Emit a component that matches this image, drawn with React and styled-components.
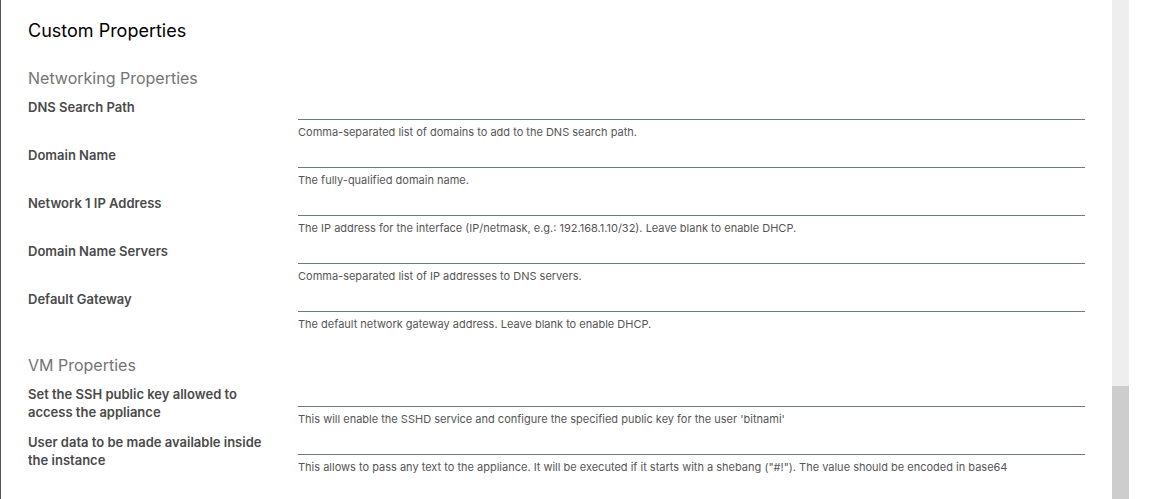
import React from 'react';
import styled, { createGlobalStyle } from 'styled-components';

const GlobalStyle = createGlobalStyle`
  html, body {
    margin: 0;
    padding: 0;
    background: #ffffff;
  }
  body {
    font-family: Inter, Lato, sans-serif;
    color: #454545;
  }
`;

const Page = styled.div`
  display: flex;
  height: 499px;
  overflow: hidden;
`;

const Panel = styled.div`
  flex: 1;
  display: flex;
  flex-direction: column;
  border-left: 1px solid #565656;
  padding: 19px 27px 0 27px;
`;

const Track = styled.div`
  width: 17px;
  background: #eeeeee;
  display: flex;
  flex-direction: column;
`;

const Thumb = styled.div`
  margin-top: 386px;
  flex: 1;
  background: #cdcdcd;
`;

const Gutter = styled.div`
  width: 24px;
`;

const Title = styled.h2`
  margin: 0 0 8px;
  font-size: 18px;
  line-height: 24px;
  font-weight: 400;
  color: #000000;
`;

const SectionTitle = styled.h3`
  margin: 17px 0 10px;
  font-size: 16px;
  line-height: 20px;
  font-weight: 400;
  color: #747474;
`;

const Row = styled.div`
  display: grid;
  grid-template-columns: 270px 1fr;
  height: 48px;
  flex-shrink: 0;
`;

const Label = styled.label`
  font-size: 13px;
  line-height: 18px;
  font-weight: 600;
  color: #4a4a4a;
  padding-right: 20px;
`;

const Field = styled.div`
  display: flex;
  flex-direction: column;
`;

const Input = styled.input`
  height: 22px;
  box-sizing: border-box;
  border: none;
  border-bottom: 1px solid #6a7a81;
  outline: none;
  padding: 0;
  background: transparent;
`;

const Helper = styled.span`
  margin-top: 5px;
  font-size: 11px;
  line-height: 14px;
  color: #565656;
`;

const networking = [
  ['DNS Search Path', 'Comma-separated list of domains to add to the DNS search path.'],
  ['Domain Name', 'The fully-qualified domain name.'],
  ['Network 1 IP Address', 'The IP address for the interface (IP/netmask, e.g.: 192.168.1.10/32). Leave blank to enable DHCP.'],
  ['Domain Name Servers', 'Comma-separated list of IP addresses to DNS servers.'],
  ['Default Gateway', 'The default network gateway address. Leave blank to enable DHCP.'],
];

const vm = [
  ['Set the SSH public key allowed to access the appliance', "This will enable the SSHD service and configure the specified public key for the user 'bitnami'"],
  ['User data to be made available inside the instance', 'This allows to pass any text to the appliance. It will be executed if it starts with a shebang ("#!"). The value should be encoded in base64'],
];

const PropRow = ({ label, help }) => (
  <Row>
    <Label>{label}</Label>
    <Field>
      <Input type="text" />
      <Helper>{help}</Helper>
    </Field>
  </Row>
);

export default function App() {
  return (
    <Page>
      <GlobalStyle />
      <Panel>
        <Title>Custom Properties</Title>
        <SectionTitle>Networking Properties</SectionTitle>
        {networking.map(([l, h]) => (
          <PropRow key={l} label={l} help={h} />
        ))}
        <SectionTitle>VM Properties</SectionTitle>
        {vm.map(([l, h]) => (
          <PropRow key={l} label={l} help={h} />
        ))}
      </Panel>
      <Track>
        <Thumb />
      </Track>
      <Gutter />
    </Page>
  );
}
